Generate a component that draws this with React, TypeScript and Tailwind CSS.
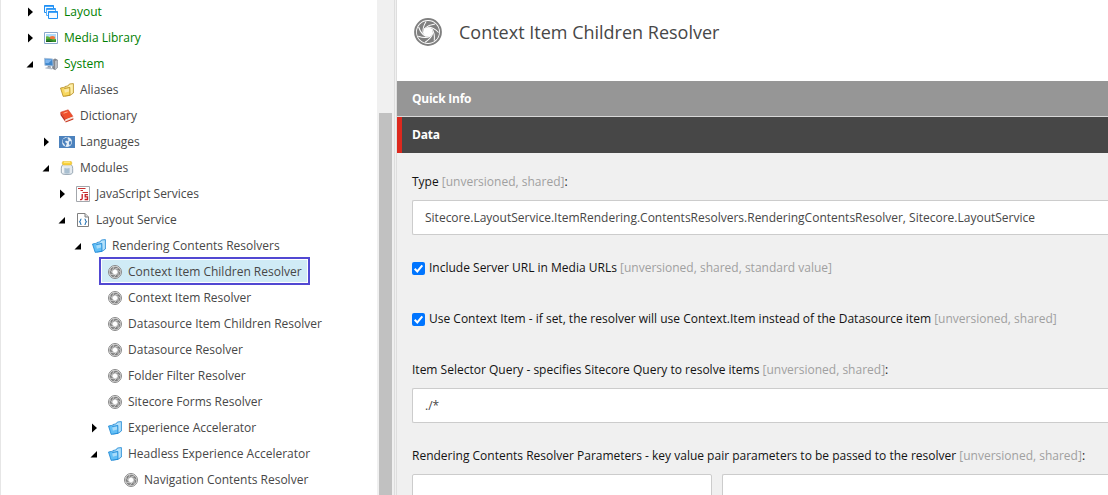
import type { ReactNode } from "react";

type IconName = "layout" | "media" | "system" | "alias" | "book" | "globe" | "jar" | "js" | "doc" | "folder" | "aperture";

interface Node {
  label: string;
  icon: IconName;
  level: number;
  state?: "open" | "closed";
  green?: boolean;
  selected?: boolean;
}

const nodes: Node[] = [
  { label: "Layout", icon: "layout", level: 0, state: "closed", green: true },
  { label: "Media Library", icon: "media", level: 0, state: "closed", green: true },
  { label: "System", icon: "system", level: 0, state: "open", green: true },
  { label: "Aliases", icon: "alias", level: 1 },
  { label: "Dictionary", icon: "book", level: 1 },
  { label: "Languages", icon: "globe", level: 1, state: "closed" },
  { label: "Modules", icon: "jar", level: 1, state: "open" },
  { label: "JavaScript Services", icon: "js", level: 2, state: "closed" },
  { label: "Layout Service", icon: "doc", level: 2, state: "open" },
  { label: "Rendering Contents Resolvers", icon: "folder", level: 3, state: "open" },
  { label: "Context Item Children Resolver", icon: "aperture", level: 4, selected: true },
  { label: "Context Item Resolver", icon: "aperture", level: 4 },
  { label: "Datasource Item Children Resolver", icon: "aperture", level: 4 },
  { label: "Datasource Resolver", icon: "aperture", level: 4 },
  { label: "Folder Filter Resolver", icon: "aperture", level: 4 },
  { label: "Sitecore Forms Resolver", icon: "aperture", level: 4 },
  { label: "Experience Accelerator", icon: "folder", level: 4, state: "closed" },
  { label: "Headless Experience Accelerator", icon: "folder", level: 4, state: "open" },
  { label: "Navigation Contents Resolver", icon: "aperture", level: 5 },
];

const indents = ["pl-[25px]", "pl-[41px]", "pl-[57px]", "pl-[73px]", "pl-[89px]", "pl-[105px]"];

function Aperture({ className }: { className: string }) {
  return (
    <svg viewBox="0 0 28 28" className={className}>
      <circle cx="14" cy="14" r="12.9" fill="#fff" stroke="#808080" strokeWidth="2" />
      <circle cx="14" cy="14" r="11.1" fill="#808080" />
      <path d="M14 9 18 10.8 19 15.2 16.2 18.7 11.8 18.7 9 15.2 10 10.8Z" fill="#fff" />
      {[0, 51.4, 102.9, 154.3, 205.7, 257.1, 308.6].map((a) => (
        <path key={a} transform={`rotate(${a} 14 14)`} d="M10.2 10.8Q13.6 6.8 21 6" fill="none" stroke="#fff" strokeWidth="1" />
      ))}
    </svg>
  );
}

function Folder({ yellow }: { yellow?: boolean }) {
  const edge = yellow ? "#b58a1c" : "#1683d2";
  const body = yellow ? "#fff0a8" : "#b4e2fc";
  const front = yellow ? "#f7d75e" : "#62bff6";
  return (
    <svg viewBox="0 0 14 14" className="size-3.5">
      <path d="M4.8 3.6 8.2 2.8 9.4 1 13.4.6V10L10 12.4 4.8 13Z" fill={body} stroke={edge} strokeWidth=".8" strokeLinejoin="round" />
      <path d="M.5 5 3.6 4.4 4.6 5.4 9.8 4.4 10 12.2 3.2 13.4Z" fill={front} stroke={edge} strokeWidth=".8" strokeLinejoin="round" />
      <path d="m4.2 6.4 4.8-1 .1 3-4.2 1.4Z" fill="#fff" opacity=".45" />
    </svg>
  );
}

function Icon({ name }: { name: IconName }) {
  if (name === "aperture") return <Aperture className="size-3.5" />;
  if (name === "folder") return <Folder />;
  if (name === "alias") return <Folder yellow />;
  const drawings: Partial<Record<IconName, ReactNode>> = {
    layout: (
      <g fill="#f5faff" stroke="#1e90f5">
        <path d="M.5.5h9v7h-9z" /><path d="M.5 1h9" strokeWidth="1.6" />
        <path d="M2.5 3.5h9v7h-9z" stroke="#55adf7" /><path d="M2.5 4h9" strokeWidth="1.6" />
        <path d="M4.5 6.5h9v7h-9z" /><path d="M4.5 7h9" strokeWidth="1.6" />
      </g>
    ),
    media: (
      <>
        <path d="M.5 1.5h13v11H.5z" fill="#fff" stroke="#8aa8cc" />
        <path d="M2 3h10v8H2z" fill="#b0dcfa" />
        <path d="M2 5.6Q4 4.6 7 7l5 1v3H2z" fill="#63b13a" />
        <ellipse cx="8.4" cy="6.7" rx="2.8" ry="1.6" fill="#f2763b" />
        <path d="M2 8.2Q6 7 8 8.6t4 .2V11H2z" fill="#2f8f2b" />
        <path d="M2 10Q5 8.4 9 11H2z" fill="#1b5f1b" />
      </>
    ),
    system: (
      <>
        <path d="M8.5 3.3 11 1.8 13.6 3V10.6L11.2 12.8 8.5 11.5Z" fill="#85888f" stroke="#6a7078" strokeWidth=".5" />
        <path d="m11 4 2.4-.8v7.4L11 12.4Z" fill="#b8bcc2" />
        <path d="M.5 1.3 8.7 2 9.2 9 .9 8.4Z" fill="#3f87cc" stroke="#a9bfd9" strokeWidth=".9" />
        <path d="M1.3 2.2 8 2.8 4.4 6.2 1.4 6Z" fill="#7fb6ee" />
        <path d="m4 9 2.6.2.5 1.6H3Z" fill="#8c94a0" /><path d="m1.8 10.2 7 1-.6 1.4-7-1Z" fill="#b5bdc9" />
      </>
    ),
    book: (
      <>
        <path d="M.6 3.2 8.2.8 13 7.4 5.4 10.4Z" fill="#f0502c" stroke="#c9351d" strokeWidth=".5" strokeLinejoin="round" />
        <path d="M.6 3.4 5.4 10.4V13L.8 6.6Q.1 4.6.6 3.4Z" fill="#c22f1c" />
        <path d="M5.4 10.4 13 7.4l.4 2.2-8 3.4Z" fill="#f5e2d8" />
        <path d="m5.4 12.4 8-3.2v1.2l-7.8 3.2Z" fill="#c9351d" />
        <path d="m3.6 4.2 4-1.3" stroke="#ffb191" />
      </>
    ),
    jar: (
      <>
        <path d="M3.2 3.4h7.6Q13 5 12.7 7.4v4.4Q12.4 13.6 7 13.6T1.3 11.8V7.4Q1 5 3.2 3.4Z" fill="#e3e9ee" stroke="#8496a5" strokeWidth=".8" />
        <path d="M4.4 7v5.2q2.6.9 5.2 0V7Q7 7.8 4.4 7Z" fill="#a9bfd0" /><path d="M2.9 6v5.5" stroke="#fff" />
        <rect x="2.2" y=".2" width="9.6" height="3.8" rx="1.7" fill="#f9d23c" stroke="#dcae28" strokeWidth=".5" /><path d="M4 1.2h6" stroke="#fff1a1" />
      </>
    ),
  };
  if (name === "globe")
    return (
      <svg viewBox="0 0 16 12" className="-ml-px h-3 w-4 shrink-0">
        <path d="M0 0h16v12H0z" fill="#4c82bd" />
        <circle cx="8" cy="6" r="5" fill="#e5eef7" />
        <path d="m7.5 1.5 2-.3L8.4 3 9.9 4 8.3 5.2 7 4.6 6 6l1.8 1.2L7.3 9l-1 1.5-1-2.6L3.5 6.3 4 3.2ZM10.5 5l2 .4L12 8l-1.4 1.5L9.8 7Z" fill="#4c82bd" />
      </svg>
    );
  if (name === "js")
    return (
      <svg viewBox="0 0 14 16" className="h-4 w-3.5">
        <path d="M.5.5h13v15H.5z" fill="#fff" stroke="#a3a7ac" />
        <path d="M2 2.5h7.5M4.5 4.5H7M6.5 6.5h5.5" stroke="#c8302f" />
        <path d="M6.2 8v4.6q0 1.2-2.2 1M12 8.6H9.2v2.2h2.3v2.7H8.6" stroke="#c41f24" strokeWidth="1.3" fill="none" />
      </svg>
    );
  if (name === "doc")
    return (
      <svg viewBox="0 0 14 14" className="size-3.5">
        <path d="M1.5.5H9L12.5 4v9.5h-11Z" fill="#fff" stroke="#808080" />
        <path d="M9 .5V4h3.5" fill="#ddd" stroke="#808080" />
        <path d="M5.5 6Q4.4 6 4.5 7.5L3.5 8.8l1 1.2Q4.4 11.5 5.5 11.5M8.5 6Q9.6 6 9.5 7.5l1 1.3-1 1.2q.1 1.5-1 1.5" fill="none" stroke="#3980bd" strokeWidth="1.1" />
      </svg>
    );
  return <svg viewBox="0 0 14 14" className="size-3.5">{drawings[name]}</svg>;
}

function Row({ node }: { node: Node }) {
  return (
    <div className={`relative flex h-[26px] items-center ${indents[node.level]}`}>
      {node.selected && <div className="absolute -top-[2px] left-[98px] h-7 w-[211px] border-2 border-[#5148d2] bg-[#d0ebf6] shadow-[inset_0_0_0_1px_#fff]" />}
      <span className="relative flex w-[18px] shrink-0">
        {node.state && (
          <svg viewBox="0 0 8 10" className="h-2.5 w-2">
            <path d={node.state === "open" ? "M7 2v6.5H.5Z" : "M2 .5 7 5 2 9.5Z"} fill="#000" />
          </svg>
        )}
      </span>
      <span className="relative flex w-5 shrink-0 items-center"><Icon name={node.icon} /></span>
      <span className={`relative leading-[18px] ${node.green ? "text-[#008000]" : "text-[#474747]"}`}>{node.label}</span>
    </div>
  );
}

function Note({ children }: { children: string }) {
  return <span className="text-[#a0a0a0]">{children}</span>;
}

function Check({ label, note }: { label: string; note: string }) {
  return (
    <div className="flex h-[18px] items-center gap-1">
      <svg viewBox="0 0 13 13" className="size-[13px]">
        <rect width="13" height="13" rx="2" fill="#0075ff" />
        <path d="m2.7 6.8 2.6 2.6 5-6.1" fill="none" stroke="#fff" strokeWidth="2" />
      </svg>
      <span>{label} <Note>{note}</Note></span>
    </div>
  );
}

export default function App() {
  return (
    <div className="flex h-[495px] w-[1108px] overflow-hidden bg-white font-['Open_Sans','Noto_Sans',sans-serif] text-xs whitespace-nowrap">
      <aside className="w-[377px] shrink-0 overflow-hidden border-l border-[#e6e6e6]">
        <div className="-mt-px">{nodes.map((n) => <Row key={n.label} node={n} />)}</div>
      </aside>
      <div className="w-[17px] shrink-0 bg-[#f0f0f0] pt-[113px] pl-0.5">
        <div className="h-[382px] w-[13px] bg-[#c1c1c1]" />
      </div>
      <div className="w-[3px] shrink-0 border-x border-[#dedede] bg-[#f0f0f0]" />
      <main className="flex min-w-0 flex-1 flex-col bg-[#f0f0f0]">
        <header className="flex h-[81px] shrink-0 bg-white pt-[18px] pl-[17px]">
          <Aperture className="size-7" />
          <h1 className="ml-[17px] text-lg leading-7 text-[#474747]">Context Item Children Resolver</h1>
        </header>
        <div className="flex h-9 shrink-0 items-center border-b border-[#d9d9d9] bg-[#969696] pl-[15px] font-bold tracking-[-0.25px] text-white">Quick Info</div>
        <div className="flex h-9 shrink-0 items-center border-l-[5px] border-[#dc291e] bg-[#474747] pl-2.5 font-bold tracking-[-0.2px] text-white">Data</div>
        <div className="pt-5 pl-[15px] text-[#131313]">
          <div className="leading-[18px]">Type <Note>[unversioned, shared]</Note>:</div>
          <div className="mt-[9px] flex h-[35px] items-center rounded-l-xs border border-r-0 border-[#ccc] bg-white pl-3 text-[#474747]">
            Sitecore.LayoutService.ItemRendering.ContentsResolvers.RenderingContentsResolver, Sitecore.LayoutService
          </div>
          <div className="mt-6 flex flex-col gap-[33px]">
            <Check label="Include Server URL in Media URLs" note="[unversioned, shared, standard value]" />
            <Check label="Use Context Item - if set, the resolver will use Context.Item instead of the Datasource item" note="[unversioned, shared]" />
          </div>
          <div className="mt-[33px] leading-[18px]">Item Selector Query - specifies Sitecore Query to resolve items <Note>[unversioned, shared]</Note>:</div>
          <div className="mt-[9px] flex h-[35px] items-center rounded-l-xs border border-r-0 border-[#ccc] bg-white pl-3 text-[#474747]">./*</div>
          <div className="mt-6 leading-[18px]">Rendering Contents Resolver Parameters - key value pair parameters to be passed to the resolver <Note>[unversioned, shared]</Note>:</div>
          <div className="mt-[9px] flex gap-2.5">
            <div className="h-[35px] w-[300px] shrink-0 rounded-xs border border-[#ccc] bg-white" />
            <div className="h-[35px] flex-1 rounded-l-xs border border-r-0 border-[#ccc] bg-white" />
          </div>
        </div>
      </main>
    </div>
  );
}
